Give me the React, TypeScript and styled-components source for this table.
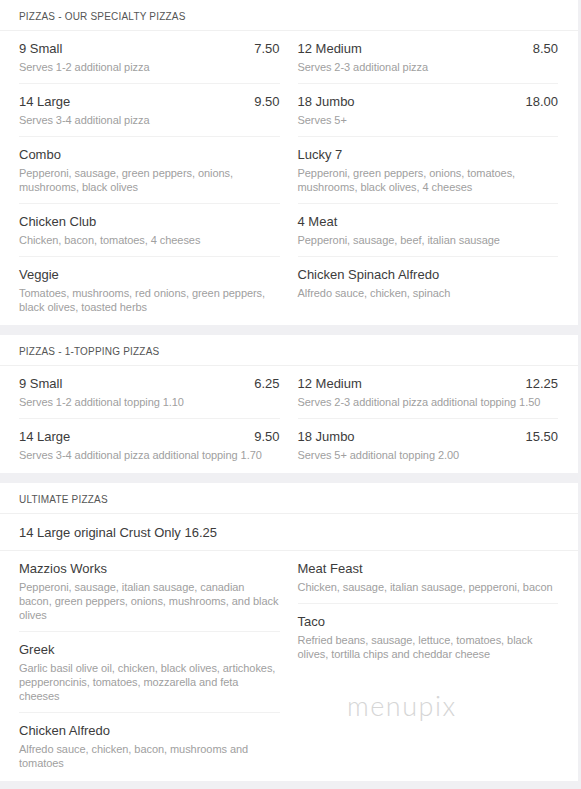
import React from "react";
import styled, { createGlobalStyle } from "styled-components";

const GlobalStyle = createGlobalStyle`
  body {
    margin: 0;
    background: #f0f0f3;
    font-family: "Liberation Sans", Arial, sans-serif;
  }
`;

const SPage = styled.div`
  display: flex;
  flex-direction: column;
  gap: 10px;
  padding-right: 3px;
  padding-bottom: 20px;
`;

const SCard = styled.section`
  position: relative;
  background: #fff;
  padding-bottom: 1px;
`;

const SCardHeader = styled.div`
  box-sizing: border-box;
  height: 31px;
  display: flex;
  align-items: center;
  padding: 2px 19px 0;
  font-size: 10px;
  letter-spacing: 0.2px;
  color: #555;
  text-transform: uppercase;
  border-bottom: 1px solid #f0f0f0;
`;

const SBanner = styled.div`
  box-sizing: border-box;
  height: 37px;
  display: flex;
  align-items: center;
  padding: 0 19px;
  font-size: 13px;
  color: #3c3c3c;
  border-bottom: 1px solid #f0f0f0;
`;

const SGrid = styled.div`
  display: grid;
  grid-template-columns: 1fr 1fr;
  column-gap: 18px;
  padding: 0 20px 0 19px;
`;

const SColumn = styled.div`
  display: flex;
  flex-direction: column;
`;

const SItem = styled.div<{ $last?: boolean }>`
  padding: 10px 0 ${(p) => (p.$last ? "10px" : "9px")};
  border-bottom: ${(p) => (p.$last ? "none" : "1px solid #f1f1f1")};
`;

const SItemTop = styled.div`
  display: flex;
  justify-content: space-between;
  font-size: 13px;
  line-height: 16px;
  color: #3c3c3c;
`;

const SDesc = styled.div`
  margin-top: 3px;
  font-size: 11px;
  line-height: 14px;
  letter-spacing: -0.06px;
  color: #a0a0a0;
`;

const SWatermark = styled.div`
  position: absolute;
  left: 347px;
  top: 206px;
  font-family: Lato, "Open Sans", sans-serif;
  font-weight: 300;
  font-size: 27px;
  letter-spacing: 1.5px;
  color: #d6d6d6;
  pointer-events: none;
`;

type Item = { name: string; price?: string; desc: string };

const specialty: Item[] = [
  { name: "9 Small", price: "7.50", desc: "Serves 1-2 additional pizza" },
  { name: "12 Medium", price: "8.50", desc: "Serves 2-3 additional pizza" },
  { name: "14 Large", price: "9.50", desc: "Serves 3-4 additional pizza" },
  { name: "18 Jumbo", price: "18.00", desc: "Serves 5+" },
  {
    name: "Combo",
    desc: "Pepperoni, sausage, green peppers, onions, mushrooms, black olives",
  },
  {
    name: "Lucky 7",
    desc: "Pepperoni, green peppers, onions, tomatoes, mushrooms, black olives, 4 cheeses",
  },
  { name: "Chicken Club", desc: "Chicken, bacon, tomatoes, 4 cheeses" },
  { name: "4 Meat", desc: "Pepperoni, sausage, beef, italian sausage" },
  {
    name: "Veggie",
    desc: "Tomatoes, mushrooms, red onions, green peppers, black olives, toasted herbs",
  },
  { name: "Chicken Spinach Alfredo", desc: "Alfredo sauce, chicken, spinach" },
];

const oneTopping: Item[] = [
  { name: "9 Small", price: "6.25", desc: "Serves 1-2 additional topping 1.10" },
  {
    name: "12 Medium",
    price: "12.25",
    desc: "Serves 2-3 additional pizza additional topping 1.50",
  },
  {
    name: "14 Large",
    price: "9.50",
    desc: "Serves 3-4 additional pizza additional topping 1.70",
  },
  { name: "18 Jumbo", price: "15.50", desc: "Serves 5+ additional topping 2.00" },
];

const ultimateLeft: Item[] = [
  {
    name: "Mazzios Works",
    desc: "Pepperoni, sausage, italian sausage, canadian bacon, green peppers, onions, mushrooms, and black olives",
  },
  {
    name: "Greek",
    desc: "Garlic basil olive oil, chicken, black olives, artichokes, pepperoncinis, tomatoes, mozzarella and feta cheeses",
  },
  {
    name: "Chicken Alfredo",
    desc: "Alfredo sauce, chicken, bacon, mushrooms and tomatoes",
  },
];

const ultimateRight: Item[] = [
  {
    name: "Meat Feast",
    desc: "Chicken, sausage, italian sausage, pepperoni, bacon",
  },
  {
    name: "Taco",
    desc: "Refried beans, sausage, lettuce, tomatoes, black olives, tortilla chips and cheddar cheese",
  },
];

const MenuItem: React.FC<{ item: Item; last?: boolean }> = ({ item, last }) => (
  <SItem $last={last}>
    <SItemTop>
      <span>{item.name}</span>
      {item.price && <span>{item.price}</span>}
    </SItemTop>
    <SDesc>{item.desc}</SDesc>
  </SItem>
);

const GridSection: React.FC<{ title: string; items: Item[] }> = ({ title, items }) => (
  <SCard>
    <SCardHeader>{title}</SCardHeader>
    <SGrid>
      {items.map((it, i) => (
        <MenuItem key={i} item={it} last={i >= items.length - 2} />
      ))}
    </SGrid>
  </SCard>
);

const App = () => {
  return (
    <>
      <GlobalStyle />
      <SPage>
        <GridSection title="Pizzas - Our Specialty Pizzas" items={specialty} />
        <GridSection title="Pizzas - 1-Topping Pizzas" items={oneTopping} />
        <SCard>
          <SCardHeader>Ultimate Pizzas</SCardHeader>
          <SBanner>14 Large original Crust Only 16.25</SBanner>
          <SGrid>
            <SColumn>
              {ultimateLeft.map((it, i) => (
                <MenuItem key={i} item={it} last={i === ultimateLeft.length - 1} />
              ))}
            </SColumn>
            <SColumn>
              {ultimateRight.map((it, i) => (
                <MenuItem key={i} item={it} last={i === ultimateRight.length - 1} />
              ))}
            </SColumn>
          </SGrid>
          <SWatermark>menupix</SWatermark>
        </SCard>
      </SPage>
    </>
  );
};

export default App;
